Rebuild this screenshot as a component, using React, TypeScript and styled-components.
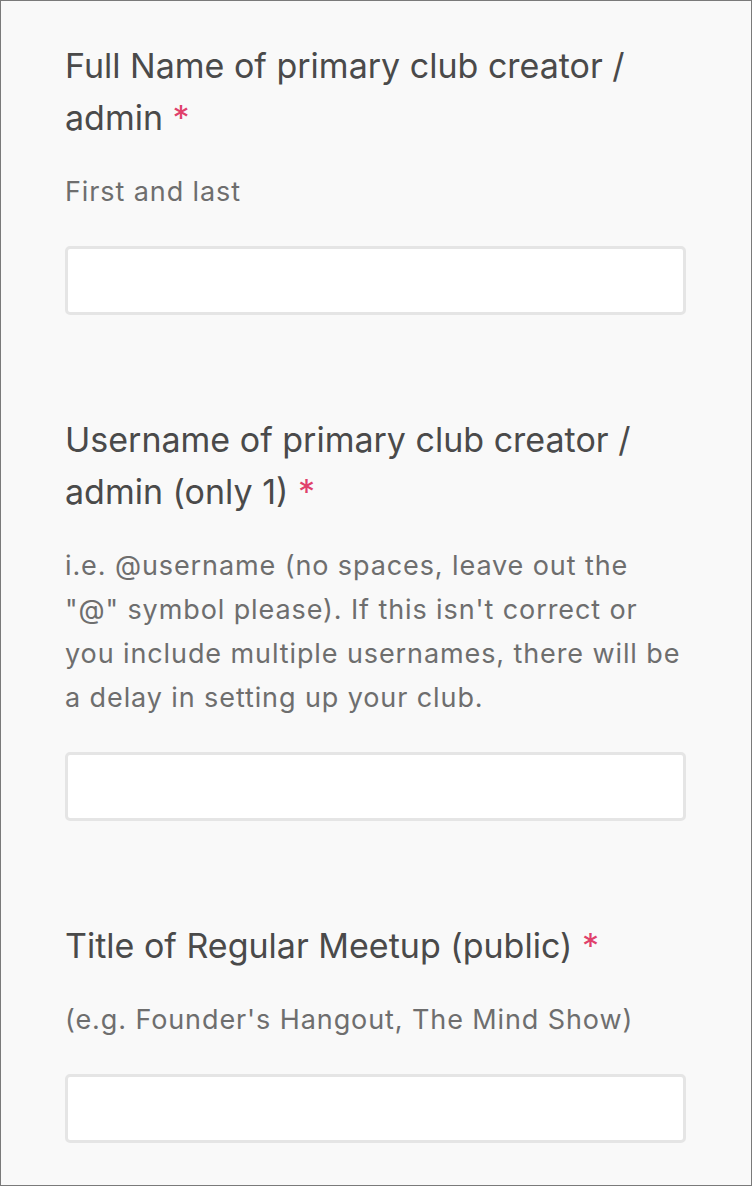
import styled, { createGlobalStyle } from "styled-components";

const GlobalStyle = createGlobalStyle`
  html, body {
    margin: 0;
    padding: 0;
    background: #f9f9f9;
  }
  * {
    box-sizing: border-box;
  }
`;

const fields = [
  {
    title: "Full Name of primary club creator / admin",
    help: "First and last",
  },
  {
    title: "Username of primary club creator / admin (only 1)",
    help: 'i.e. @username (no spaces, leave out the "@" symbol please). If this isn\'t correct or you include multiple usernames, there will be a delay in setting up your club.',
  },
  {
    title: "Title of Regular Meetup (public)",
    help: "(e.g. Founder's Hangout, The Mind Show)",
  },
];

const App = () => {
  return (
    <Frame>
      <GlobalStyle />
      {fields.map((f) => (
        <Field key={f.title}>
          <Title>
            {f.title} <Required>*</Required>
          </Title>
          <Help>{f.help}</Help>
          <Input type="text" />
        </Field>
      ))}
    </Frame>
  );
};

export default App;

const Frame = styled.div`
  width: 752px;
  height: 1186px;
  overflow: hidden;
  border: 1px solid #7a7a7a;
  background: #f9f9f9;
  padding: 39px 65px 0 64px;
  display: flex;
  flex-direction: column;
  gap: 99px;
  font-family: Inter, "Noto Sans", sans-serif;
`;

const Field = styled.div`
  display: flex;
  flex-direction: column;
`;

const Title = styled.div`
  font-size: 34px;
  line-height: 52px;
  color: #4a4a4a;
`;

const Required = styled.span`
  color: #e0416b;
`;

const Help = styled.div`
  margin-top: 26px;
  font-size: 27px;
  line-height: 44px;
  letter-spacing: 0.9px;
  color: #6e6e6e;
`;

const Input = styled.input`
  margin-top: 32px;
  height: 69px;
  width: 100%;
  background: #fff;
  border: 3px solid #e5e5e5;
  border-radius: 5px;
  outline: none;
`;
